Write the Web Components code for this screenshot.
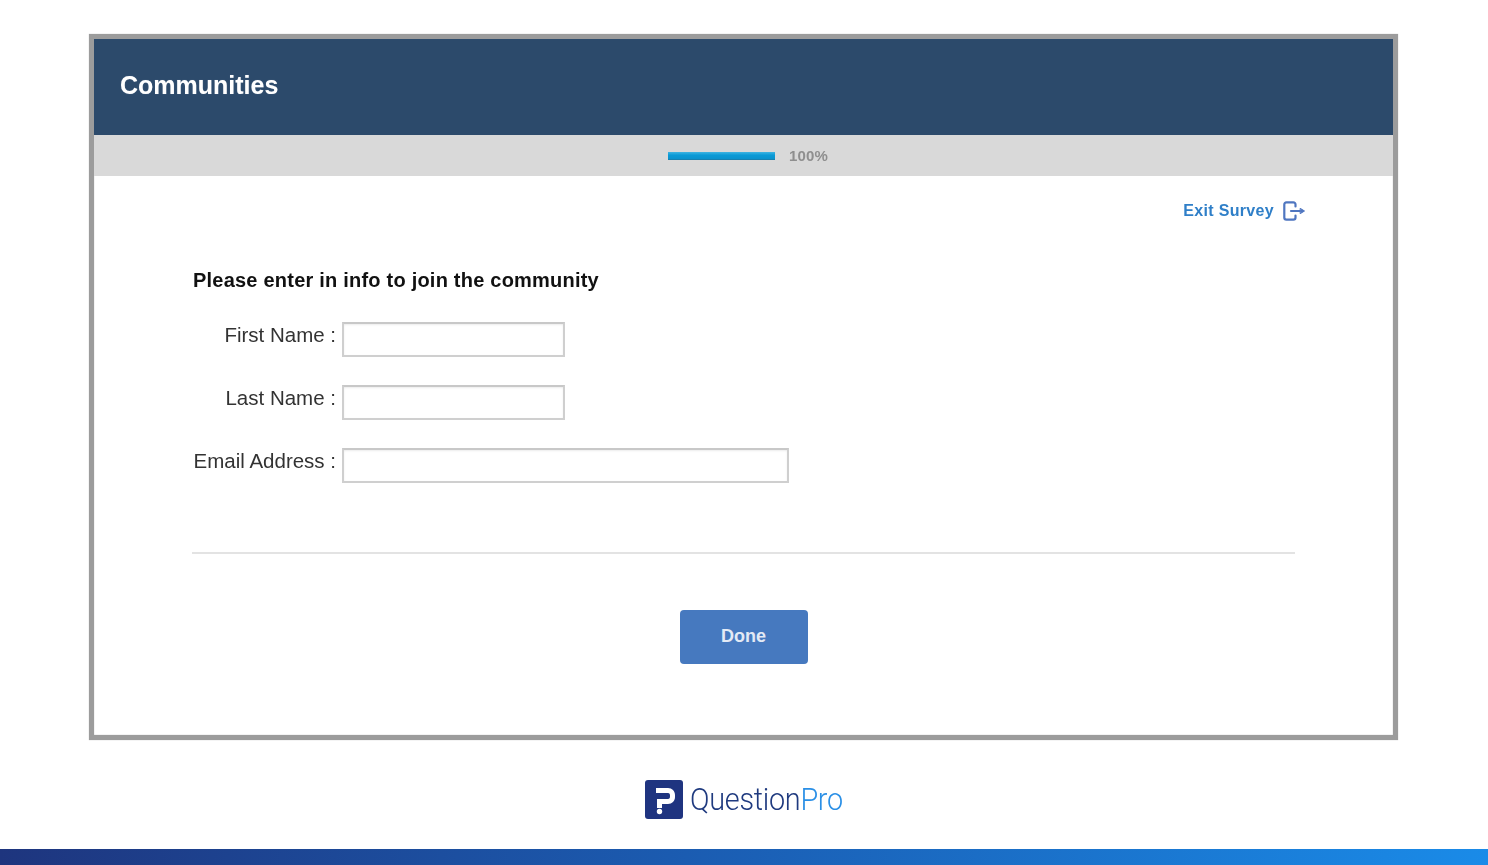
<!DOCTYPE html>
<html lang="en"><head><meta charset="utf-8"><title>Communities</title>
<style>
html,body{margin:0;height:100%;background:#fff}
body{font-family:"Liberation Sans",Arial,sans-serif}
</style></head><body>
<survey-page>
  <survey-panel title="Communities" progress="100">
    <exit-link slot="exit">Exit Survey</exit-link>
    <h-q slot="question">Please enter in info to join the community</h-q>
    <form-row slot="fields" label="First Name :" width="223"></form-row>
    <form-row slot="fields" label="Last Name :" width="223"></form-row>
    <form-row slot="fields" label="Email Address :" width="447"></form-row>
    <done-button slot="action">Done</done-button>
  </survey-panel>
  <qp-logo></qp-logo>
</survey-page>
<script>
function def(name,html,init){
  customElements.define(name,class extends HTMLElement{
    connectedCallback(){
      if(this.shadowRoot)return;
      const r=this.attachShadow({mode:'open'});
      r.innerHTML=html;
      if(init)init(this,r);
    }
  });
}
def('survey-page',`<style>
:host{display:flex;flex-direction:column;width:1488px;height:865px;overflow:hidden;background:#fff}
.main{flex:1;display:flex;flex-direction:column;padding:34px 90px 0 89px;box-sizing:border-box;filter:blur(.35px)}
.strip{height:16px;background:linear-gradient(90deg,#1e357e 0%,#1b5bb0 45%,#1a8be8 100%)}
</style><div class="main"><slot></slot></div><div class="strip"></div>`);
def('survey-panel',`<style>
:host{display:block;border:5px solid #9c9c9c;height:706px;box-sizing:border-box;background:#fff;box-shadow:0 0 1px #bbb,inset 0 0 1px #888}
.head{height:96px;background:#2c4a6b;display:flex;align-items:center;padding:0 0 4px 26px;color:#fff;font-weight:700;font-size:25px;box-sizing:border-box;text-shadow:0 0 1px rgba(255,255,255,.3)}
.prog{height:41px;background:#d9d9d9;display:flex;align-items:center;justify-content:center;gap:14px;font-size:15px;font-weight:700;color:#8f8f8f;padding-left:9px;box-sizing:border-box;letter-spacing:.1px}
.track{width:107px;height:8px;background:linear-gradient(#3fb4e2,#0a9ad6 40%,#0a8fc9);box-shadow:inset 0 -1px 0 #1781b0}
.body{padding:0 98px}
.exit{display:flex;justify-content:flex-end;padding:25px 0 0;height:33px;margin-right:-11px}
.q{margin-top:34px;padding-left:1px}
.fields{display:flex;flex-direction:column;gap:28px;margin-top:30px}
hr{border:0;border-top:2px solid #e3e3e3;margin:69px 0 0}
.action{display:flex;justify-content:center;margin:56px 0 0 0}
</style>
<div class="head"><span id="t"></span></div>
<div class="prog"><div class="track"></div><span id="p"></span></div>
<div class="body">
<div class="exit"><slot name="exit"></slot></div>
<div class="q"><slot name="question"></slot></div>
<div class="fields"><slot name="fields"></slot></div>
<hr>
<div class="action"><slot name="action"></slot></div>
</div>`,(h,r)=>{r.getElementById('t').textContent=h.getAttribute('title');r.getElementById('p').textContent=h.getAttribute('progress')+'%';h.removeAttribute('title')});
def('exit-link',`<style>
:host{display:inline-flex;align-items:center;gap:9px;color:#2f7fc8;font-size:16px;font-weight:700;height:20px;letter-spacing:.32px}
svg{display:block}
</style><slot></slot><svg width="23" height="20" viewBox="0 0 23 20" fill="none" stroke="#4f76c0" stroke-width="2.2" stroke-linecap="round" stroke-linejoin="round"><path d="M12.5 5.5V3.6C12.5 2.2 11.6 1.400 10.4 1.400H3.4C2.100 1.400 1.300 2.200 1.300 3.600V16.400C1.300 17.800 2.100 18.600 3.400 18.600H10.400C11.600 18.600 12.500 17.800 12.500 16.400V14.500"/><path d="M8 10H17"/><path d="M17.500 7.500L21.500 10L17.500 12.500Z" fill="#4f76c0" stroke-width="1"/></svg>`);
def('h-q',`<style>:host{display:block;font-size:20px;font-weight:700;color:#111;line-height:24px;letter-spacing:.22px}</style><slot></slot>`);
def('form-row',`<style>
:host{display:flex;align-items:flex-start;height:35px}
label{width:144px;text-align:right;font-size:20.500px;color:#333;line-height:24px;padding-top:1px;margin-right:6px;flex:none;white-space:nowrap}
input{display:block;box-sizing:border-box;height:35px;border:2px solid #cfcfcf;border-top-color:#c8c8c8;background:#fff;padding:0;margin:0;box-shadow:inset 0 1px 2px rgba(0,0,0,.08);outline:0}
</style><label id="l"></label><input type="text">`,(h,r)=>{const l=r.getElementById('l');l.textContent=h.getAttribute('label');r.querySelector('input').style.width=h.getAttribute('width')+'px';r.querySelector('input').setAttribute('aria-label',h.getAttribute('label'))});
def('done-button',`<style>
:host{display:flex;align-items:center;justify-content:center;width:128px;height:54px;background:#4679bf;border-radius:4px;color:#e3eaf5;font-size:18px;font-weight:700;box-sizing:border-box;padding-bottom:1px}
</style><slot></slot>`);
def('qp-logo',`<style>
:host{display:flex;align-items:center;justify-content:center;gap:7px;height:39px;margin-top:40px}
svg{display:block}
.t{display:inline-block;width:153px;font-family:Roboto,"Liberation Sans",sans-serif;font-weight:300;font-size:32px;line-height:39px;color:#1f3a7f;letter-spacing:-.3px;white-space:nowrap;transform:scaleX(.9);transform-origin:left center}
.t b{font-weight:300;color:#2a8fe6}
</style>
<svg width="38" height="39" viewBox="0 0 38 39"><rect width="38" height="39" rx="3" fill="#1f3480"/><path d="M11 8H23C27 8 30 11 30 15V17C30 21 27 24 23 24H17V28H12V19H23C24.500 19 25 18 25 16.500V15.500C25 14 24.500 13 23 13H11Z" fill="#fff"/><circle cx="14.500" cy="31.500" r="2.700" fill="#fff"/></svg>
<span class="t">Question<b>Pro</b></span>`);
</script></body></html>
